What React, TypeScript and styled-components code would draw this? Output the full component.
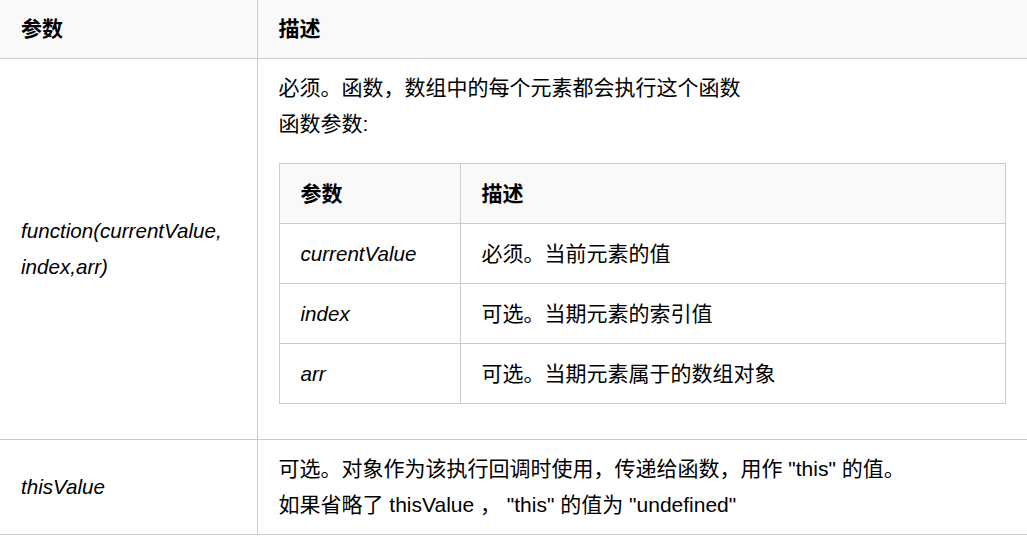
import React from 'react'
import styled, { createGlobalStyle } from 'styled-components'

const GlobalStyle = createGlobalStyle`
	*, *::before, *::after {
		box-sizing: border-box;
	}
	html, body {
		margin: 0;
		padding: 0;
		background: #fff;
	}
	body {
		font-family: 'Liberation Sans', Arial, 'Noto Sans CJK SC', sans-serif;
		font-size: 21px;
		color: #000;
	}
`

const Table = styled.table`
	width: 100%;
	border-collapse: collapse;
	table-layout: fixed;
`

const HeadCell = styled.th<{ $width?: number }>`
	width: ${(p) => (p.$width ? `${p.$width}px` : 'auto')};
	background: #f9f9f9;
	font-weight: bold;
	text-align: left;
	line-height: 36px;
	padding: 11px 21px;
	border-bottom: 1px solid #cccccc;
	& + & {
		border-left: 1px solid #cccccc;
	}
`

const Cell = styled.td<{ $top?: boolean }>`
	line-height: 36px;
	padding: 11px 21px;
	vertical-align: ${(p) => (p.$top ? 'top' : 'middle')};
	border-bottom: 1px solid #cccccc;
	& + & {
		border-left: 1px solid #cccccc;
	}
`

const Param = styled.span`
	font-style: italic;
	font-size: 20.6px;
`

const InnerTable = styled.table`
	width: 100%;
	border-collapse: collapse;
	table-layout: fixed;
	margin: 21px 0 24px;
	border: 1px solid #cccccc;
`

const InnerHead = styled.th<{ $width?: number }>`
	width: ${(p) => (p.$width ? `${p.$width}px` : 'auto')};
	background: #f9f9f9;
	font-weight: bold;
	text-align: left;
	line-height: 36px;
	padding: 12px 21px 11px;
	border: 1px solid #cccccc;
`

const InnerCell = styled.td`
	line-height: 36px;
	padding: 12px 21px 11px;
	border: 1px solid #cccccc;
`

const args = [
	{ name: 'currentValue', desc: '必须。当前元素的值' },
	{ name: 'index', desc: '可选。当期元素的索引值' },
	{ name: 'arr', desc: '可选。当期元素属于的数组对象' },
]

export default function App() {
	return (
		<>
			<GlobalStyle />
			<Table>
				<thead>
					<tr>
						<HeadCell $width={257}>参数</HeadCell>
						<HeadCell>描述</HeadCell>
					</tr>
				</thead>
				<tbody>
					<tr>
						<Cell>
							<Param>function(currentValue, index,arr)</Param>
						</Cell>
						<Cell $top>
							必须。函数，数组中的每个元素都会执行这个函数
							<br />
							函数参数:
							<InnerTable>
								<thead>
									<tr>
										<InnerHead $width={181}>参数</InnerHead>
										<InnerHead>描述</InnerHead>
									</tr>
								</thead>
								<tbody>
									{args.map((a) => (
										<tr key={a.name}>
											<InnerCell>
												<Param>{a.name}</Param>
											</InnerCell>
											<InnerCell>{a.desc}</InnerCell>
										</tr>
									))}
								</tbody>
							</InnerTable>
						</Cell>
					</tr>
					<tr>
						<Cell>
							<Param>thisValue</Param>
						</Cell>
						<Cell>
							可选。对象作为该执行回调时使用，传递给函数，用作 "this" 的值。
							<br />
							如果省略了 thisValue ， "this" 的值为 "undefined"
						</Cell>
					</tr>
				</tbody>
			</Table>
		</>
	)
}
